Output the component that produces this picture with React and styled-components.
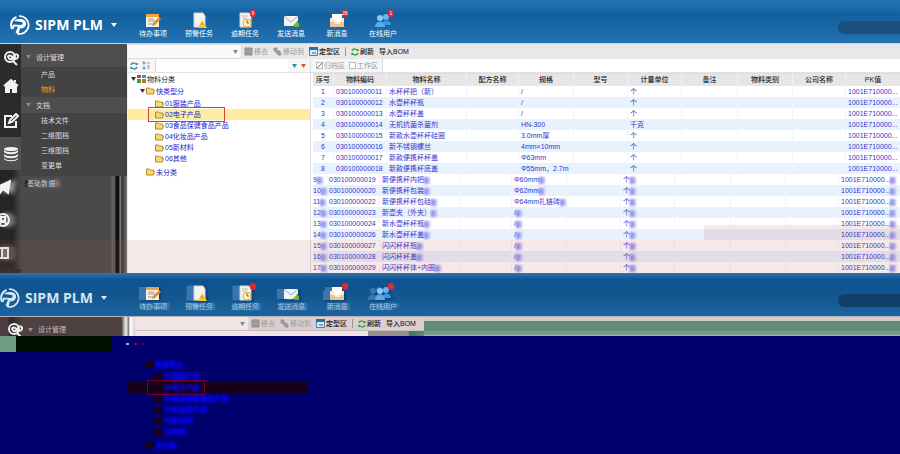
import React, { useState } from "react";
import styled, { createGlobalStyle, css } from "styled-components";

const GlobalStyle = createGlobalStyle`
  * {
    box-sizing: border-box;
  }

  body {
    margin: 0;
    background: #00006c;
    font-family: "Liberation Sans", "Noto Sans CJK SC", sans-serif;
    font-size: 7px;
    line-height: 11px;
  }

  button, input, select {
    font: inherit;
    color: inherit;
    margin: 0;
    padding: 0;
    border: 0;
    background: none;
  }

  svg {
    display: block;
    flex: none;
  }
`;

const Page = styled.div`
  min-height: 100vh;
`;

/* ---------- header ---------- */

const Header = styled.header`
  display: flex;
  align-items: center;
  height: 43px;
  padding-left: ${(p) => (p.$ghost ? 0 : 10)}px;
  color: #fff;
  background: ${(p) =>
    p.$ghost
      ? "linear-gradient(#2d76b0, #10528e 16%, #12558f 45%, #1b639f)"
      : "linear-gradient(#2574b0, #14609f 35%, #1b69a8 70%, #2473b2)"};
`;

const Brand = styled.a`
  display: flex;
  align-items: center;
  gap: 5px;
  width: ${(p) => (p.$ghost ? 130 : 120)}px;
  padding-top: 6px;
  color: ${(p) => (p.$ghost ? "#d5e5f2" : "#fff")};
  font: 700 14px/20px "Open Sans", sans-serif;
  white-space: nowrap;
  text-decoration: none;
`;

const Caret = styled.span`
  margin-left: 3px;
  border: 3px solid transparent;
  border-top: 4px solid currentColor;
  border-bottom: 0;
`;

const HeaderNav = styled.nav`
  display: flex;
  flex: 1;
`;

const NavButton = styled.button`
  display: flex;
  flex-direction: column;
  align-items: center;
  width: 46px;
  padding-top: 8px;
  white-space: nowrap;

  ${(p) =>
    p.$ghost &&
    css`
      color: #a9c8e2;
      text-shadow: 3px 0 2px #6a9cc8;

      svg {
        filter: drop-shadow(-7px 0 0 #3976ab) drop-shadow(2px 1px 1px #0b4174);
      }
    `}
`;

const IconHolder = styled.span`
  position: relative;
`;

const Badge = styled.span`
  position: absolute;
  top: -2px;
  right: -3px;
  min-width: 6px;
  height: 7px;
  border-radius: 4px;
  background: #e3282e;
  color: ${(p) => (p.$ghost ? "#e3282e" : "#fff")};
  font-size: 5px;
  line-height: 7px;
  text-align: center;
  text-shadow: none;
`;

const Search = styled.input`
  width: 62px;
  height: 13px;
  margin-top: 12px;
  border-radius: 6px 0 0 6px;
  background: ${(p) => (p.$ghost ? "#123f69" : "#1b4f7c")};
`;

/* ---------- workspace ---------- */

const Workspace = styled.div`
  position: relative;
  display: flex;
  border-top: 1px solid #c4d5e2;
`;

const Rail = styled.nav`
  display: flex;
  flex-direction: column;
  width: 21px;
  background: #2b2b2b;
`;

const RailButton = styled.button`
  display: flex;
  align-items: center;
  justify-content: ${(p) => (p.$cut ? "flex-start" : "center")};
  height: ${(p) => (p.$short ? 28 : 33)}px;
  overflow: hidden;
  color: #f2f2f2;
  background: ${(p) => (p.$active ? "#505050" : "none")};
  ${(p) =>
    p.$cut &&
    css`
      background: linear-gradient(90deg, #252525 60%, #4a4a4a);

      svg {
        margin-left: -5px;
        filter: drop-shadow(5px 0 2px #999);
      }
    `}
`;

const RailSpacer = styled.div`
  height: 4px;
`;

const Menu = styled.nav`
  display: flex;
  flex-direction: column;
  width: 107px;
  border-right: 1px solid #eee;
  background: #434343;
  color: #ddd;
`;

const MenuGroup = styled.button`
  display: flex;
  align-items: center;
  gap: 5px;
  height: ${(p) => (p.$first ? 23 : 16)}px;
  padding: ${(p) => (p.$first ? 3 : 0)}px 0 0 5px;
  background: #4e4e4e;
`;

const MenuLink = styled.a`
  height: 15px;
  padding-left: 20px;
  line-height: 15px;
  color: ${(p) => (p.$active ? "#f0a020" : "#ddd")};
  text-decoration: none;
`;

const MenuRest = styled.div`
  flex: 1;
  margin-top: 3px;
  padding: 2px 0 0 6px;
  color: #ccc;
  background: linear-gradient(
    90deg,
    #4a4a4a 90px,
    #666 91px,
    #555 94px,
    #0c0c0c 95px,
    #111 98px,
    #8c8c8c 99px,
    #333 101px,
    #777 106px
  );
  text-shadow: -3px 0 0 #111, 5px 0 3px #aaa;
`;

const Main = styled.main`
  flex: 1;
  min-width: 0;
  background: #fff;
`;

const Toolbar = styled.div`
  display: flex;
  align-items: center;
  height: ${(p) => (p.$ghost ? 13 : 15)}px;
  color: #222;
  background: ${(p) => (p.$ghost ? "#dcced0" : "#e8e8e8")};
  ${(p) => p.$ghost && "text-shadow: -3px 0 2px #857d7e;"}
`;

const ViewSelect = styled.select`
  width: 114px;
  height: 15px;
  border: 1px solid #ddd;
  border-left: 0;
  background: ${(p) => (p.$ghost ? "#f0e4e5" : "#fafafa")};
  appearance: none;
`;

const SelectWrap = styled.label`
  display: flex;
  align-items: center;
  overflow: hidden;
  height: 100%;

  svg {
    margin-left: -9px;
    margin-right: 6px;
  }
`;

const ToolButton = styled.button`
  display: flex;
  align-items: center;
  gap: 1px;
  margin-right: 5px;
  font-weight: ${(p) => (p.$muted ? 400 : 500)};
  white-space: nowrap;
  color: ${(p) => (p.$muted ? "#999" : "#111")};
`;

const Divider = styled.span`
  width: 1px;
  height: 9px;
  margin-right: 5px;
  background: #999;
`;

const Panes = styled.div`
  display: flex;
`;

const TreePane = styled.section`
  width: 183px;
  border-right: 1px solid #ddd;
`;

const FilterRow = styled.div`
  display: flex;
  align-items: center;
  gap: 4px;
  height: 14px;
  padding-left: ${(p) => p.$indent}px;
  border-bottom: 1px solid #e2e2e2;
  background: #f6f6f6;
  color: #999;
`;

const FilterInput = styled.input`
  flex: 1;
  min-width: 0;
  height: 13px;
  border-left: 1px solid #ddd;
  background: #fff;
`;

const CheckLabel = styled.label`
  display: flex;
  align-items: center;
  gap: 1px;
`;

const Check = styled.input`
  width: 7px;
  height: 7px;
  border: 1px solid #bbb;
  background: #fff;
  appearance: none;

  &:checked {
    background: linear-gradient(135deg, #fff 40%, #888 50%, #fff 65%);
  }
`;

/* ---------- tree ---------- */

const TreeList = styled.ul`
  margin: 0;
  padding: ${(p) => (p.$leaves ? "1px 0 2px" : "0")};
  list-style: none;
  color: ${(p) => (p.$ghost ? "#0808ff" : "#2424cc")};
`;

const TreeRow = styled.div`
  position: relative;
  display: flex;
  align-items: center;
  gap: 1px;
  height: ${(p) => (p.$level === 2 ? 11 : 12)}px;
  padding-left: ${(p) => [3, 12, 27][p.$level]}px;
  white-space: nowrap;
  color: ${(p) => (p.$level === 0 ? "#222" : "inherit")};
  background: ${(p) =>
    p.$selected ? (p.$ghost ? "#170019" : "#ffeca2") : "none"};

  span {
    ${(p) =>
      p.$ghost && "filter: blur(1px); text-shadow: 0 0 1px #00f, 1px 0 2px #00f;"}
  }
`;

const Outline = styled.i`
  position: absolute;
  left: 20px;
  top: -2px;
  width: ${(p) => (p.$ghost ? 58 : 77)}px;
  height: 15px;
  border: 1px solid ${(p) => (p.$ghost ? "#75002d" : "#e03a35")};
`;

/* ---------- grid ---------- */

const GridPane = styled.section`
  flex: 1;
  min-width: 0;
  overflow: hidden;
`;

const Grid = styled.table`
  width: 100%;
  padding-left: 2px;
  border-spacing: 0;
  table-layout: fixed;
  color: #3434cc;

  th, td {
    height: 11px;
    padding: 0 0 0 2px;
    font-weight: 400;
    line-height: 11px;
    text-align: left;
    white-space: nowrap;
    border-right: 1px solid #f1f5fa;
  }

  th {
    height: 13px;
    padding: 0;
    color: #222;
    font-weight: 500;
    line-height: 12px;
    text-align: center;
    background: #e6e6e6;
    border-right-color: #f2f2f2;
    border-top: 1px solid #ddd;
  }

  td:first-child {
    padding: 0;
    text-align: ${(p) => (p.$cut ? "left" : "center")};
  }

  td:last-child, th:last-child {
    border-right: 0;
  }

  tr:nth-child(even) td {
    background: #e8f2fd;
  }
`;

const Smear = styled.span`
  display: inline-block;
  width: 6px;
  height: 7px;
  vertical-align: middle;
  background: linear-gradient(90deg, #7d7dea, #c4c4f8);
  filter: blur(1px);
`;

const PinkBand = styled.div`
  position: absolute;
  left: 0;
  right: 0;
  bottom: 0;
  height: 33px;
  background: rgba(185, 70, 80, 0.12);
  pointer-events: none;
`;

const PinkStep = styled(PinkBand)`
  left: 704px;
  bottom: 33px;
  height: 15px;
`;

/* ---------- broken frame ---------- */

const Strip = styled.div`
  display: flex;
  height: 20px;
  border-top: 1px solid #b9b0b6;
`;

const StripMenu = styled.div`
  display: flex;
  align-items: center;
  gap: 5px;
  width: 122px;
  padding: 6px 0 0 7px;
  background: linear-gradient(90deg, #4a3e40 8px, #2c2425 10px, #4d4142 22px);
  color: #c8bcbd;

  svg:first-child {
    color: #eee;
  }
`;

const StripEdge = styled.div`
  width: 13px;
  background: linear-gradient(90deg, #6e6163, #eee 30%, #8f8588 50%, #fff 65%, #d9cdd0);
`;

const StripTools = styled.div`
  width: 289px;
  overflow: hidden;
  background: #f0e4e6;
`;

const StripTail = styled.div`
  display: flex;
  justify-content: flex-end;
  border-top: 1px solid #cbbcbe;

  &::after {
    content: "";
    width: 56px;
    height: 6px;
    background: linear-gradient(90deg, #93918c 40px, #4d7060 42px, #5f8a72);
  }
`;

const GreenBand = styled.div`
  flex: 1;
  border-top: 4px solid #d5cbcd;
  background: linear-gradient(#628d76 10px, #8bb59b 11px, #5f8a72 12px, #8fb79f 14px);
`;

const Damage = styled.section`
  background: #00006c;
  padding-bottom: 3px;
`;

const DamageTop = styled.div`
  display: flex;
  align-items: center;
  height: 16px;
  margin-bottom: 6px;

  &::before {
    content: "";
    width: 112px;
    height: 16px;
    background: linear-gradient(90deg, #6c9c82 16px, #001000 16px);
  }
`;

const Speck = styled.i`
  width: 3px;
  height: 2px;
  margin-left: ${(p) => p.$gap}px;
  background: ${(p) => p.$tone};
`;

const DamageTree = styled.div`
  width: 308px;
  padding-left: 127px;
`;

/* ---------- icons ---------- */

const LogoMark = () => (
  <svg width="20" height="20" viewBox="0 0 20 20" fill="none">
    <path d="M9 1.200A8.800 8.800 0 1 1 7 18.300" stroke="currentColor" strokeWidth="1.800" />
    <path d="M6.500 2C1.500 4 0 9 2 14" stroke="currentColor" strokeWidth="2" />
    <path
      d="M4 6c2-2 6-2.500 9-1.500 4 1.500 4 6 1 8-1.500 1-3 1-4 .8L8.500 19l-3-1.500L8 11.500H4.500L3 15l-1-3 1.500-2.500 7 .5c2 0 3-2.500 1-3-2-.500-5-.500-7.500-1z"
      fill="currentColor"
    />
  </svg>
);

const Sheet = () => (
  <path d="M3 1h9l2 3v11H3z" fill="#f5f3ef" stroke="#cfd8df" strokeWidth="1" />
);

const headerIcons = {
  todo: (
    <>
      <path d="M1 2h13v13H1z" fill="#f8f2e6" />
      <path d="M1 2h13v3H1z" fill="#f2a33a" />
      <path d="M3 7h6M3 9h7M3 12h5" stroke="#999" />
      <path d="m8 11 6-6 2 2-6 6-3 1z" fill="#e88d24" />
    </>
  ),
  warn: (
    <>
      <Sheet />
      <path d="m11 8 5 8H7z" fill="#f6c52c" />
      <path d="M11 11v2" stroke="#b98a10" />
    </>
  ),
  late: (
    <>
      <Sheet />
      <path d="M5 4h6M5 6h4" stroke="#bbb" />
      <circle cx="10" cy="11" r="4" fill="#fff3cf" stroke="#e0a938" />
      <path d="M10 8v3h2" stroke="#8a5a10" fill="none" />
    </>
  ),
  send: (
    <>
      <path d="M1 4h14v10H1z" fill="#f3f3ef" />
      <path d="m1 4 7 6 7-6" stroke="#aab" fill="none" />
      <path d="m10 14 5-6v3h1v4h-4z" fill="#71b832" />
    </>
  ),
  inbox: (
    <>
      <path d="M3 2h10v8H3z" fill="#fff" />
      <path d="M1 6h3l2 4h5l2-4h2v9H1z" fill="#f6ead4" />
      <path d="M1 10h4l1 2h5l1-2h3v5H1z" fill="#edc48c" />
    </>
  ),
  users: (
    <>
      <circle cx="11" cy="5" r="3" fill="#68b6f0" />
      <path d="M7 13c0-6 9-6 9 0z" fill="#3f98de" />
      <circle cx="5" cy="6" r="3" fill="#8ccaf8" />
      <path d="M0 15c0-7 10-7 10 0z" fill="#58acec" />
    </>
  ),
};

const HeaderIcon = ({ name }) => (
  <svg width="16" height="16" viewBox="0 0 16 16">
    {headerIcons[name]}
  </svg>
);

const railIcons = {
  search: (
    <>
      <circle cx="7" cy="7" r="5" />
      <path d="m10 11 4 4M5 7c0-2 3-2 4 0s5 3 6 0-3-4-5 0-4 2-5 0" />
    </>
  ),
  home: (
    <>
      <path d="m1 8 7-6 7 6M12 4V2" />
      <path d="M3 8l5-4 5 4v6h-3v-4H6v4H3z" fill="currentColor" />
    </>
  ),
  edit: <path d="M9 3H2v11h11V8M6 10l1-3 6-6 2 2-6 6z" />,
  data: (
    <g fill="currentColor" stroke="none">
      <ellipse cx="8" cy="3" rx="7" ry="2" />
      <path d="M1 4c2 3 12 3 14 0v2c-2 3-12 3-14 0zM1 8c2 3 12 3 14 0v2c-2 3-12 3-14 0zM1 12c2 3 12 3 14 0v1c-2 3-12 3-14 0z" />
    </g>
  ),
  plane: <path d="M0 9 15 2l-2 12-5-4-3 4v-4z" fill="currentColor" />,
  user: (
    <>
      <circle cx="8" cy="8" r="6" />
      <path d="M6 5h4v4H6zM4 13l2-3h4l2 3" />
    </>
  ),
  book: <path d="M2 3h5v10H2zM7 3h6v10H7M4 5v6" />,
};

const RailIcon = ({ name, size = 16 }) => (
  <svg width={size} height={size} viewBox="0 0 16 16" fill="none" stroke="currentColor" strokeWidth="2">
    {railIcons[name]}
  </svg>
);

const Arrow = ({ color = "#888" }) => (
  <svg width="5" height="4" viewBox="0 0 5 4">
    <path d="M0 0h5L2.500 4z" fill={color} />
  </svg>
);

const Folder = ({ ghost }) => (
  <svg width="9" height="8" viewBox="0 0 9 8">
    <path
      d="M.5 7V1h3l1 1h3v1.500h1L7.500 7z"
      fill={ghost ? "#1d0018" : "#f7d774"}
      stroke={ghost ? "#16001d" : "#b58a2c"}
    />
  </svg>
);

const RootIcon = () => (
  <svg width="9" height="8" viewBox="0 0 9 8">
    <path d="M0 0h4v3H0z" fill="#d33" />
    <path d="M5 0h4v3H5z" fill="#468bd0" />
    <path d="M0 4h4v4H0z" fill="#3c9b45" />
    <path d="M5 4h4v4H5z" fill="#c0722a" />
  </svg>
);

const Refresh = ({ color = "#36a53c" }) => (
  <svg width="8" height="8" viewBox="0 0 8 8" fill="none" stroke={color} strokeWidth="1.500">
    <path d="M1 3c1-3 5-2 6 0V1M7 5C6 8 2 7 1 5v2" />
  </svg>
);

const SmallIcon = ({ kind }) => (
  <svg width="9" height="9" viewBox="0 0 9 9">
    {kind === "remove" && <path d="M1 1h7v7H1zM2 3h5M2 6h5" fill="#aaa" stroke="#888" />}
    {kind === "move" && <path d="M1 1h3v3h3v2h1v2H5V6H3V4H1z" fill="#999" stroke="#999" />}
    {kind === "sort" && (
      <path d="M1 1h2v2H1zM1 6h2v2H1zM5 2h3M5 5h3M5 7h3" fill="#b9cde0" stroke="#7f9fc0" />
    )}
    {kind === "zone" && (
      <>
        <path d="M.5.5h8v8h-8z" fill="#dcebf7" stroke="#457fb4" />
        <path d="M0 0h9v3H0z" fill="#2e6ca8" />
        <path d="M3 5h4v2H3z" fill="#79a8d0" />
      </>
    )}
  </svg>
);

/* ---------- data ---------- */

const navItems = [
  { icon: "todo", label: "待办事项" },
  { icon: "warn", label: "预警任务" },
  { icon: "late", label: "逾期任务", count: "9" },
  { icon: "send", label: "发送消息" },
  { icon: "inbox", label: "新消息", count: "26" },
  { icon: "users", label: "在线用户", count: "1" },
];

const leaves = [
  "01服装产品",
  "02电子产品",
  "03食品保健食品产品",
  "04化妆品产品",
  "05新材料",
  "06其他",
];

const columns = [
  ["序号", 21],
  ["物料编码", 53],
  ["物料名称", 80],
  ["配方名称", 52],
  ["规格", 55],
  ["型号", 54],
  ["计量单位", 54],
  ["备注", 56],
  ["物料类别", 55],
  ["公司名称", 53],
  ["PK值", null],
];

const rows = [
  ["030100000011", "水杯杯把（新）", "/"],
  ["030100000012", "水壶杯杯瓶", "/"],
  ["030100000013", "水壶杯杯盖", "/"],
  ["030100000014", "无机抗菌杀菌剂", "HN-300", "千克"],
  ["030100000015", "新款水壶杯杯硅圈", "3.0mm厚"],
  ["030100000016", "新不锈钢螺丝", "4mm×10mm"],
  ["030100000017", "新款便携杯杯盖", "Φ63mm"],
  ["030100000018", "新款便携杯底盖", "Φ55mm，2.7m"],
];

const cutRows = [
  ["030100000019", "新便携杯内把", "Φ60mm"],
  ["030100000020", "新便携杯包装", "Φ62mm"],
  ["030100000022", "新便携杯杯包硅", "Φ64mm扎链砖"],
  ["030100000023", "新壶夹（外夹）", "/"],
  ["030100000024", "新水壶杯杯瓶", "/"],
  ["030100000026", "新水壶杯杯盖", "/"],
  ["030100000027", "闪闪杯杯瓶", "/"],
  ["030100000028", "闪闪杯杯盖", "/"],
  ["030100000029", "闪闪杯杯体+内圈", "/"],
];

/* ---------- parts ---------- */

const TopBar = ({ ghost }) => (
  <Header $ghost={ghost}>
    <Brand href="#" $ghost={ghost}>
      <LogoMark />
      SIPM PLM
      <Caret />
    </Brand>
    <HeaderNav>
      {navItems.map((item) => (
        <NavButton key={item.label} $ghost={ghost}>
          <IconHolder>
            <HeaderIcon name={item.icon} />
            {item.count && <Badge $ghost={ghost}>{item.count}</Badge>}
          </IconHolder>
          {item.label}
        </NavButton>
      ))}
    </HeaderNav>
    <Search type="search" aria-label="搜索" $ghost={ghost} />
  </Header>
);

const Tools = ({ ghost }) => (
  <Toolbar $ghost={ghost}>
    <SelectWrap>
      <ViewSelect aria-label="视图" $ghost={ghost} />
      <Arrow />
    </SelectWrap>
    <ToolButton $muted>
      <SmallIcon kind="remove" />
      移去
    </ToolButton>
    <ToolButton $muted>
      <SmallIcon kind="move" />
      移动到
    </ToolButton>
    <ToolButton>
      <SmallIcon kind="zone" />
      定型区
    </ToolButton>
    <Divider />
    <ToolButton>
      <Refresh />
      刷新
    </ToolButton>
    <ToolButton>导入BOM</ToolButton>
  </Toolbar>
);

const Tree = ({ ghost }) => {
  const [selected, setSelected] = useState(leaves[1]);

  return (
    <TreeList $ghost={ghost}>
      {!ghost && (
        <li>
          <TreeRow $level={0}>
            <Arrow color="#333" />
            <RootIcon />
            <span>物料分类</span>
          </TreeRow>
        </li>
      )}
      <li>
        <TreeRow $level={1} $ghost={ghost}>
          <Arrow color={ghost ? "#00006c" : "#333"} />
          <Folder ghost={ghost} />
          <span>快类型分</span>
        </TreeRow>
        <TreeList $leaves $ghost={ghost}>
          {leaves.map((leaf) => (
            <li key={leaf} onClick={() => setSelected(leaf)}>
              <TreeRow $level={2} $ghost={ghost} $selected={leaf === selected}>
                <Folder ghost={ghost} />
                <span>{leaf}</span>
                {leaf === selected && <Outline $ghost={ghost} />}
              </TreeRow>
            </li>
          ))}
        </TreeList>
      </li>
      <li>
        <TreeRow $level={1} $ghost={ghost}>
          <Arrow color="transparent" />
          <Folder ghost={ghost} />
          <span>未分类</span>
        </TreeRow>
      </li>
    </TreeList>
  );
};

const DataGrid = ({ data, start, cut }) => (
  <Grid $cut={cut}>
    <colgroup>
      {columns.map(([name, width], i) => (
        <col key={name} width={cut && i === 0 ? 14 : width || undefined} />
      ))}
    </colgroup>
    {!cut && (
      <thead>
        <tr>
          {columns.map(([name]) => (
            <th key={name}>{name}</th>
          ))}
        </tr>
      </thead>
    )}
    <tbody>
      {data.map(([code, name, spec, unit = "个"], i) => (
        <tr key={code}>
          <td>
            {start + i}
            {cut && <Smear />}
          </td>
          <td>{code}</td>
          <td>
            {name}
            {cut && <Smear />}
          </td>
          <td />
          <td>
            {spec}
            {cut && <Smear />}
          </td>
          <td />
          <td>
            {unit}
            {cut && <Smear />}
          </td>
          <td />
          <td />
          <td />
          <td>
            1001E710000...
            {cut && <Smear />}
          </td>
        </tr>
      ))}
    </tbody>
  </Grid>
);

const SideMenu = () => (
  <Menu>
    <MenuGroup $first>
      <Arrow />
      设计管理
    </MenuGroup>
    <MenuLink href="#">产品</MenuLink>
    <MenuLink href="#" $active>
      物料
    </MenuLink>
    <MenuGroup>
      <Arrow />
      文档
    </MenuGroup>
    <MenuLink href="#">技术文件</MenuLink>
    <MenuLink href="#">二维图档</MenuLink>
    <MenuLink href="#">三维图档</MenuLink>
    <MenuLink href="#">变更单</MenuLink>
    <MenuRest>基础数据</MenuRest>
  </Menu>
);

const SideRail = () => (
  <Rail>
    <RailButton $short aria-label="搜索">
      <RailIcon name="search" />
    </RailButton>
    <RailButton $short aria-label="首页">
      <RailIcon name="home" />
    </RailButton>
    <RailSpacer />
    <RailButton aria-label="编辑">
      <RailIcon name="edit" />
    </RailButton>
    <RailButton $active aria-label="数据">
      <RailIcon name="data" />
    </RailButton>
    <RailButton $cut aria-label="发送">
      <RailIcon name="plane" />
    </RailButton>
    <RailButton $cut aria-label="用户">
      <RailIcon name="user" />
    </RailButton>
    <RailButton $cut aria-label="文档">
      <RailIcon name="book" />
    </RailButton>
  </Rail>
);

const App = () => (
  <Page>
    <GlobalStyle />
    <TopBar />
    <Workspace>
      <SideRail />
      <SideMenu />
      <Main>
        <Tools />
        <Panes>
          <TreePane>
            <FilterRow $indent={2}>
              <Refresh color="#3b86c4" />
              <SmallIcon kind="sort" />
              <FilterInput aria-label="筛选分类" />
              <Arrow color="#2c8fa6" />
              <Arrow color="#e0542c" />
              <span />
            </FilterRow>
            <Tree />
          </TreePane>
          <GridPane>
            <FilterRow $indent={5}>
              <CheckLabel>
                <Check type="checkbox" defaultChecked />
                归档区
              </CheckLabel>
              <CheckLabel>
                <Check type="checkbox" />
                工作区
              </CheckLabel>
              <FilterInput aria-label="筛选物料" />
            </FilterRow>
            <DataGrid data={rows} start={1} />
            <DataGrid data={cutRows} start={9} cut />
          </GridPane>
        </Panes>
      </Main>
      <PinkBand />
      <PinkStep />
    </Workspace>

    <TopBar ghost />
    <Strip>
      <StripMenu>
        <RailIcon name="search" />
        <Arrow color="#9a8d8f" />
        设计管理
      </StripMenu>
      <StripEdge />
      <StripTools>
        <Tools ghost />
        <StripTail />
      </StripTools>
      <GreenBand />
    </Strip>
    <Damage>
      <DamageTop>
        <Speck $gap={14} $tone="#6fb4f0" />
        <Speck $gap={5} $tone="#a00030" />
        <Speck $gap={4} $tone="#600048" />
      </DamageTop>
      <DamageTree>
        <Tree ghost />
      </DamageTree>
    </Damage>
  </Page>
);

export default App;
